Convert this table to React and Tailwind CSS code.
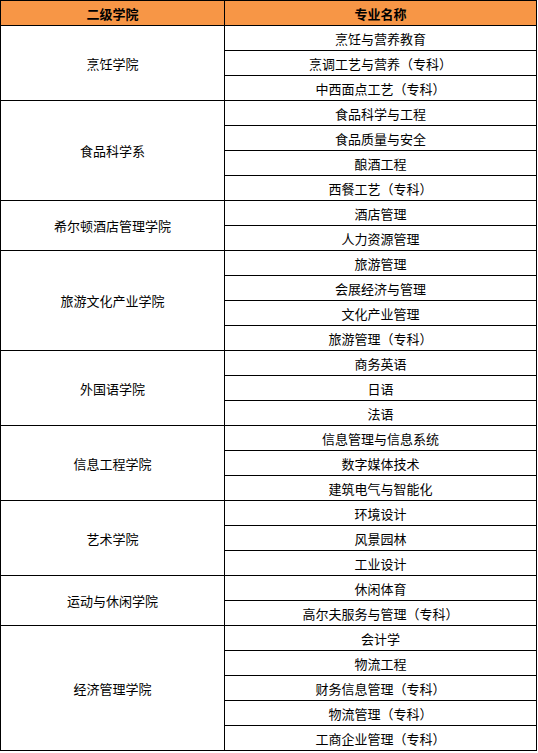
const groups = [
  { name: '烹饪学院', majors: ['烹饪与营养教育', '烹调工艺与营养（专科）', '中西面点工艺（专科）'] },
  { name: '食品科学系', majors: ['食品科学与工程', '食品质量与安全', '酿酒工程', '西餐工艺（专科）'] },
  { name: '希尔顿酒店管理学院', majors: ['酒店管理', '人力资源管理'] },
  { name: '旅游文化产业学院', majors: ['旅游管理', '会展经济与管理', '文化产业管理', '旅游管理（专科）'] },
  { name: '外国语学院', majors: ['商务英语', '日语', '法语'] },
  { name: '信息工程学院', majors: ['信息管理与信息系统', '数字媒体技术', '建筑电气与智能化'] },
  { name: '艺术学院', majors: ['环境设计', '风景园林', '工业设计'] },
  { name: '运动与休闲学院', majors: ['休闲体育', '高尔夫服务与管理（专科）'] },
  { name: '经济管理学院', majors: ['会计学', '物流工程', '财务信息管理（专科）', '物流管理（专科）', '工商企业管理（专科）'] },
];

export default function App() {
  return (
    <div className="bg-white w-[538px] h-[753px] font-['Noto_Sans_CJK_SC',sans-serif] text-[13px] text-black">
      <table className="table-fixed border-collapse w-[536px]">
        <colgroup>
          <col className="w-[224px]" />
          <col className="w-[312px]" />
        </colgroup>
        <thead>
          <tr className="h-[25px] bg-[#f79646]">
            <th className="border border-black p-0 font-bold leading-none">二级学院</th>
            <th className="border border-black p-0 font-bold leading-none">专业名称</th>
          </tr>
        </thead>
        <tbody>
          {groups.map((g) =>
            g.majors.map((m, i) => (
              <tr key={g.name + m} className="h-[25px]">
                {i === 0 && (
                  <td rowSpan={g.majors.length} className="border border-black p-0 text-center leading-none">
                    {g.name}
                  </td>
                )}
                <td className="border border-black p-0 text-center leading-none">{m}</td>
              </tr>
            ))
          )}
        </tbody>
      </table>
    </div>
  );
}
